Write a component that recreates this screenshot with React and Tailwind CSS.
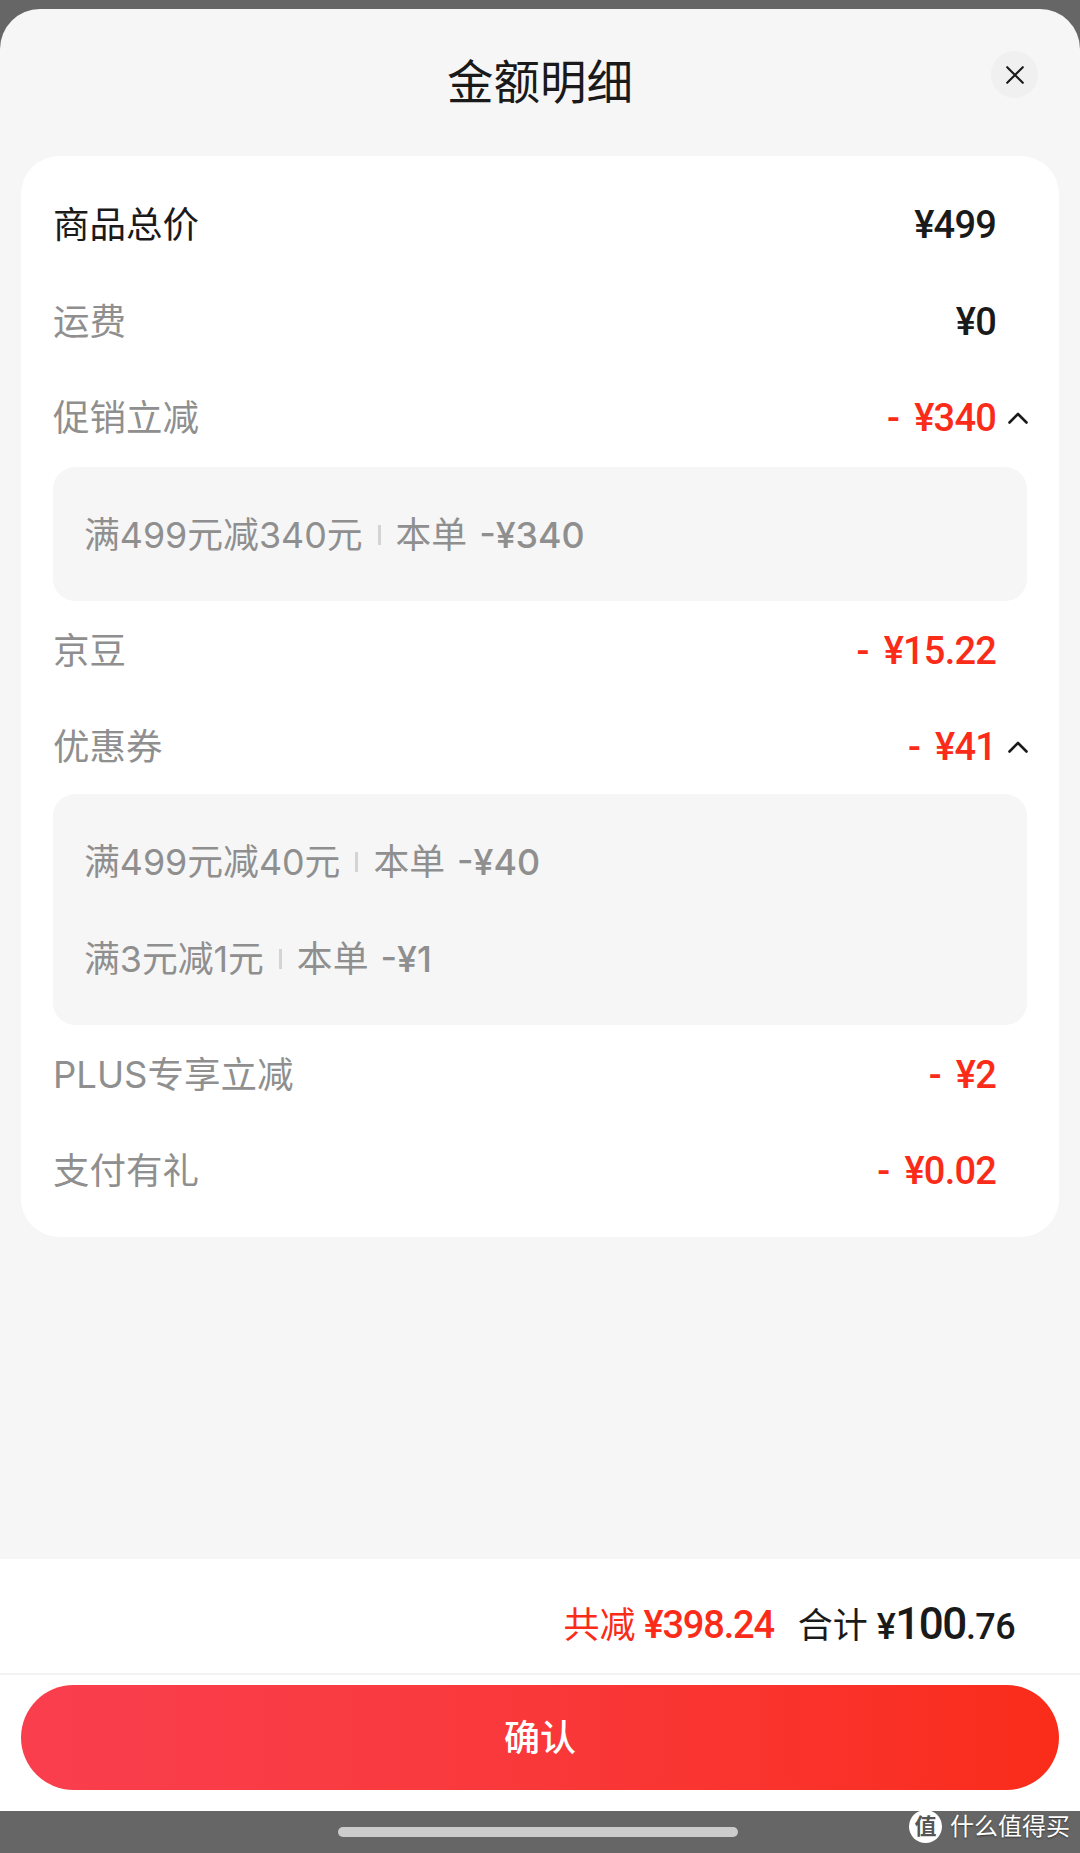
const sans = "font-['Inter','Noto_Sans_CJK_SC',sans-serif]";
const digits = "font-['Roboto','Noto_Sans_CJK_SC',sans-serif] font-medium";

function Chevron() {
  return (
    <svg width="22" height="14" viewBox="0 0 22 14" fill="none" className="ml-[11px] shrink-0">
      <path d="M2.5 11.5 L11 3 L19.5 11.5" stroke="#1a1a1a" strokeWidth="2.6" strokeLinecap="round" strokeLinejoin="round" />
    </svg>
  );
}

function Row({ label, amount, red, dark, open }) {
  return (
    <div className="h-[96.5px] pl-[32px] pr-[30px] pt-[4px] flex items-center justify-between">
      <span className={`text-[36.5px] leading-[48px] ${dark ? "text-[#1a1a1a]" : "text-[#8f8f8f]"}`}>{label}</span>
      <span className="flex items-center">
        <span className={`${digits} text-[38px] tracking-[-0.8px] leading-[48px] ${red ? "text-[#fa2c19]" : "text-[#1a1a1a]"} ${open ? "" : "mr-[33px]"}`}>
          {red && <span className="mr-[15px]">-</span>}
          {amount}
        </span>
        {open && <Chevron />}
      </span>
    </div>
  );
}

function Promo({ name, value }) {
  return (
    <div className="flex items-center h-[48px] text-[35.8px] leading-[48px] text-[#8f8f8f]">
      <span>{name}</span>
      <span className="mx-[15px] w-[3px] h-[20px] bg-[#d4d4d4]" />
      <span>本单</span>
      <span className="ml-[12px] font-medium">-{value}</span>
    </div>
  );
}

function Panel({ children, className }) {
  return (
    <div className={`mx-[32px] rounded-[22px] bg-[#f6f6f6] px-[31px] pt-[3px] flex flex-col justify-center gap-[49px] ${className}`}>
      {children}
    </div>
  );
}

export default function App() {
  return (
    <div className={`h-[1853px] w-[1080px] bg-[#666666] pt-[9px] flex flex-col overflow-hidden ${sans}`}>
      <div className="flex-1 rounded-t-[40px] bg-[#f6f6f6] flex flex-col overflow-hidden">
        <header className="relative h-[147px] pt-[41px] text-center shrink-0">
          <h1 className="text-[46.5px] leading-[64px] font-normal text-[#1a1a1a]">金额明细</h1>
          <button className="absolute right-[42px] top-[42px] w-[47px] h-[47px] rounded-full bg-[#f0f0f0] flex items-center justify-center">
            <svg width="18" height="18" viewBox="0 0 18 18" fill="none">
              <path d="M1.2 1.2 L16.8 16.8 M16.8 1.2 L1.2 16.8" stroke="#1a1a1a" strokeWidth="2.1" strokeLinecap="round" />
            </svg>
          </button>
        </header>

        <section className="mx-[21px] h-[1081px] shrink-0 rounded-[38px] bg-white pt-[19px]">
          <Row label="商品总价" amount="¥499" dark />
          <Row label="运费" amount="¥0" />
          <Row label="促销立减" amount="¥340" red open />
          <Panel className="h-[134px] mt-[2px]">
            <Promo name="满499元减340元" value="¥340" />
          </Panel>
          <Row label="京豆" amount="¥15.22" red />
          <Row label="优惠券" amount="¥41" red open />
          <Panel className="h-[231px]">
            <Promo name="满499元减40元" value="¥40" />
            <Promo name="满3元减1元" value="¥1" />
          </Panel>
          <Row label="PLUS专享立减" amount="¥2" red />
          <Row label="支付有礼" amount="¥0.02" red />
        </section>

        <footer className="mt-auto bg-white shrink-0">
          <div className="h-[116px] border-b-2 border-[#f2f2f2] flex items-center justify-end pr-[65px] pt-[18px]">
            <span className="text-[36px] leading-[48px] text-[#fa2c19]">共减</span>
            <span className={`ml-[8px] ${digits} text-[38px] tracking-[-1.2px] leading-[48px] text-[#fa2c19]`}>¥398.24</span>
            <span className="ml-[24px] text-[35px] leading-[48px] text-[#1a1a1a]">合计</span>
            <span className={`ml-[9px] ${digits} text-[#1a1a1a] leading-[48px] text-[36px] tracking-[-0.6px]`}>
              ¥<span className="text-[44px] tracking-[-1.5px]">100</span><span>.76</span>
            </span>
          </div>
          <div className="px-[21px] pt-[10px] pb-[21px]">
            <button className="w-full h-[105px] rounded-full bg-gradient-to-r from-[#f93e4e] via-[#f93a3e] via-40% to-[#fa2c19] text-white text-[36px] font-medium">
              确认
            </button>
          </div>
        </footer>
      </div>

      <div className="relative h-[42px] shrink-0 flex items-center justify-center">
        <div className="w-[400px] h-[10px] -translate-x-[2px] rounded-full bg-[#cccccc]" />
        <div className="absolute right-[10px] -top-[1px] flex items-center gap-[8px]">
          <span className="w-[33px] h-[33px] rounded-full bg-white text-[#555555] text-[22px] leading-[33px] text-center font-bold">值</span>
          <span className="text-white text-[24px] leading-[32px] [text-shadow:0_1px_2px_rgba(0,0,0,0.5)]">什么值得买</span>
        </div>
      </div>
    </div>
  );
}
